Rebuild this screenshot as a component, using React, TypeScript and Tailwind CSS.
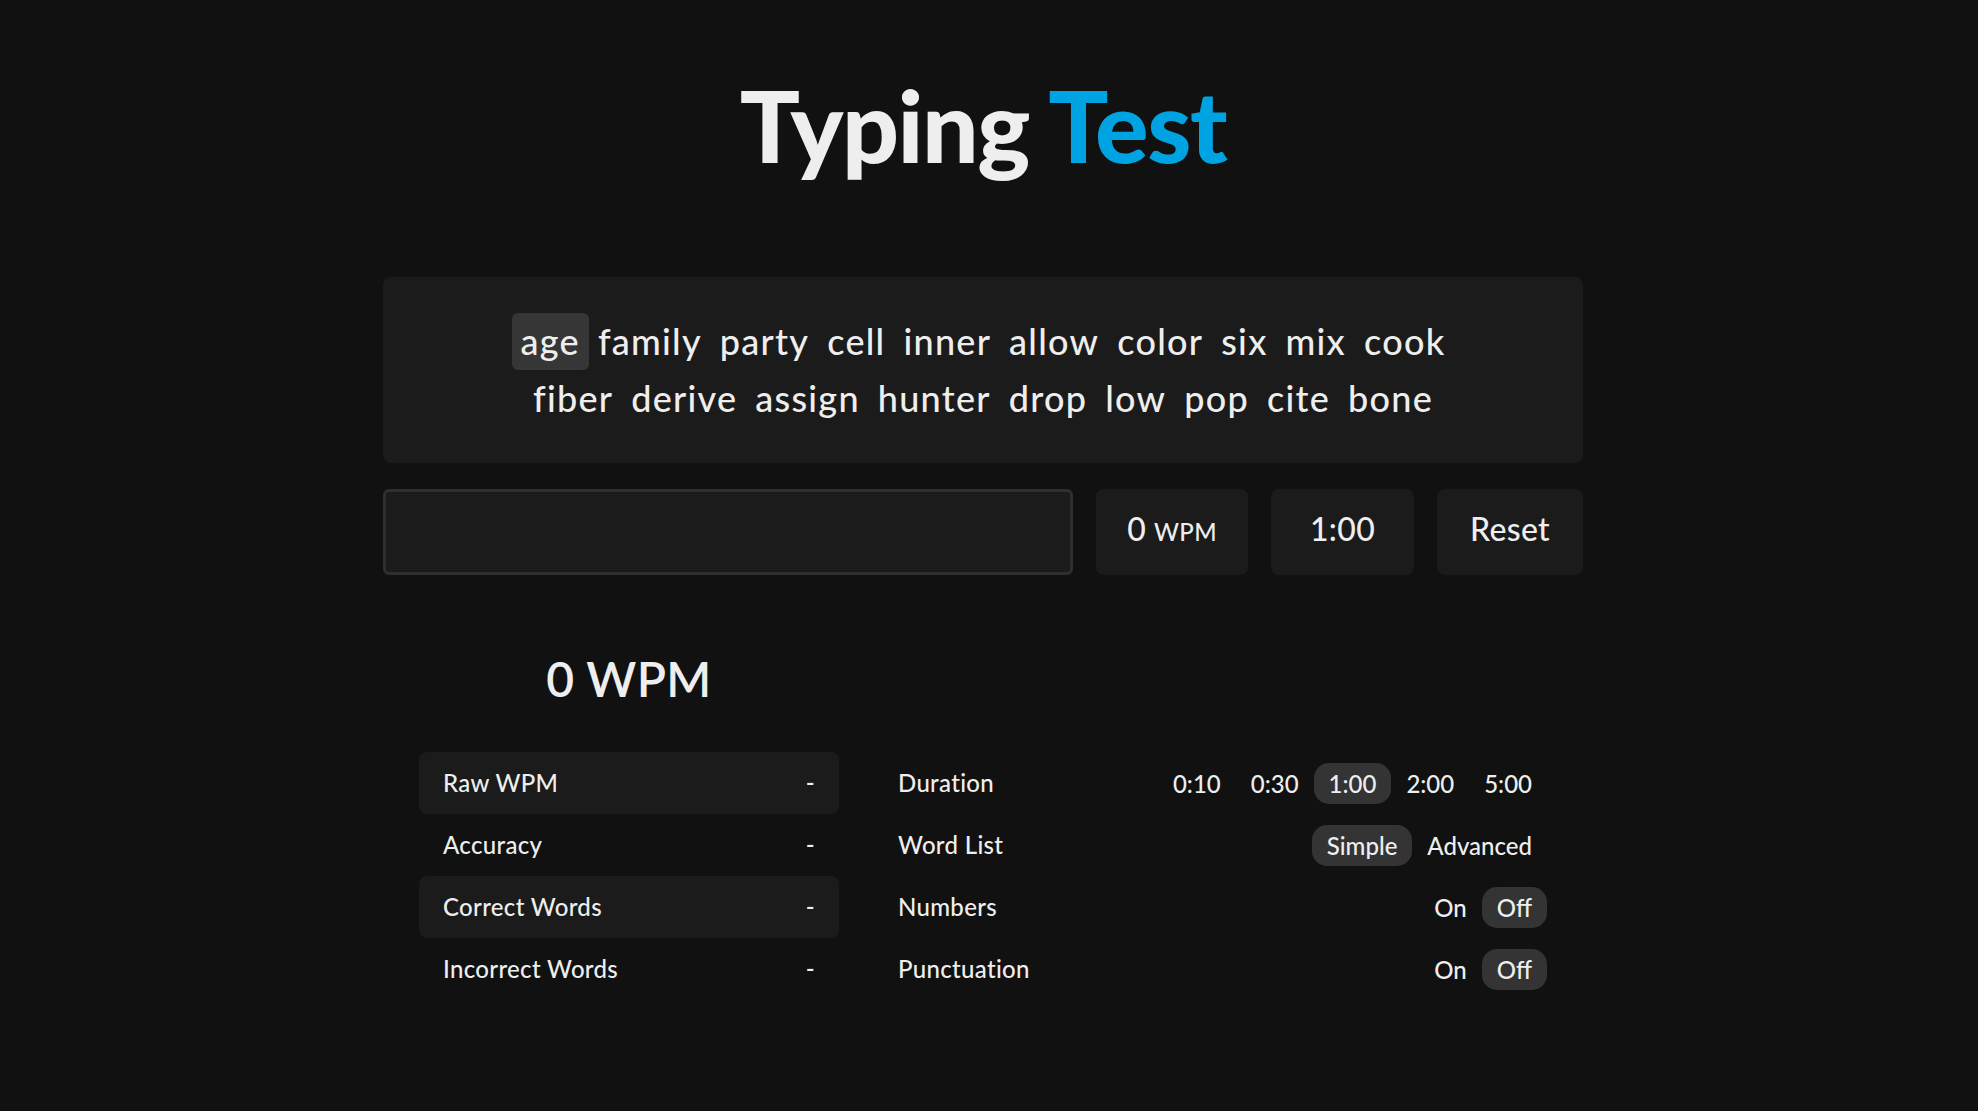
import { useState } from "react";

const lineOne = ["age", "family", "party", "cell", "inner", "allow", "color", "six", "mix", "cook"];
const lineTwo = ["fiber", "derive", "assign", "hunter", "drop", "low", "pop", "cite", "bone"];

const stats = ["Raw WPM", "Accuracy", "Correct Words", "Incorrect Words"];

type OptionRowProps = {
  label: string;
  options: string[];
  selected: string;
};

function OptionRow({ label, options, selected }: OptionRowProps) {
  return (
    <div className="flex h-[62px] items-center justify-between">
      <span>{label}</span>
      <div className="flex items-center tracking-normal">
        {options.map((opt) => (
          <button
            key={opt}
            className={
              opt === selected
                ? "h-[41px] rounded-[15px] bg-[#343434] px-[15px] leading-[41px]"
                : "h-[41px] rounded-[15px] px-[15px] leading-[41px]"
            }
          >
            {opt}
          </button>
        ))}
      </div>
    </div>
  );
}

export default function App() {
  const [text, setText] = useState("");

  return (
    <div className="min-h-[1111px] bg-[#111111] font-[Lato,'Noto_Sans',sans-serif] tracking-[0.02em] text-[#eeeeee]">
      <div className="flex justify-center pr-3">
        <main className="flex w-[1200px] flex-col">
          <h1 className="mt-[74px] text-center text-[100px] font-black leading-none tracking-[-0.015em]">
            Typing <span className="text-[#00a3e2]">Test</span>
          </h1>

          <section className="mt-[103px] rounded-lg bg-[#1b1b1b] py-[36px] text-[36px] font-medium tracking-[0.035em]">
            {[lineOne, lineTwo].map((line, i) => (
              <div key={i} className="flex justify-center">
                {line.map((word, j) => (
                  <span
                    key={word}
                    className={
                      i === 0 && j === 0
                        ? "h-[57px] rounded-md bg-[#363636] px-[9px] leading-[57px]"
                        : "h-[57px] rounded-md px-[9px] leading-[57px]"
                    }
                  >
                    {word}
                  </span>
                ))}
              </div>
            ))}
          </section>

          <div className="mt-[26px] flex h-[86px] gap-[23px] text-[32px] font-medium">
            <input
              value={text}
              onChange={(e) => setText(e.target.value)}
              className="flex-1 rounded-md border-[3px] border-[#2f2f2f] bg-[#1b1b1b] px-4 text-[32px] outline-none"
            />
            <div className="flex w-[152px] items-baseline justify-center rounded-lg bg-[#1b1b1b] pt-[16px]">
              <span>0</span>
              <span className="ml-2 text-[24px]">WPM</span>
            </div>
            <div className="flex w-[143px] items-center justify-center rounded-lg bg-[#1b1b1b] pb-[6px]">1:00</div>
            <button className="w-[146px] rounded-lg bg-[#1b1b1b] pb-[6px]">Reset</button>
          </div>

          <div className="flex px-[36px] text-[24px] font-medium">
            <div className="flex w-[420px] flex-col">
              <div className="mt-[80px] mb-[49px] text-center text-[48px] font-semibold leading-none">0 WPM</div>
              {stats.map((s, i) => (
                <div
                  key={s}
                  className={
                    i % 2 === 0
                      ? "flex h-[62px] items-center justify-between rounded-lg bg-[#1b1b1b] px-[24px]"
                      : "flex h-[62px] items-center justify-between rounded-lg px-[24px]"
                  }
                >
                  <span>{s}</span>
                  <span>-</span>
                </div>
              ))}
            </div>
            <div className="ml-[35px] flex flex-1 flex-col pt-[177px] pl-[24px]">
              <OptionRow label="Duration" options={["0:10", "0:30", "1:00", "2:00", "5:00"]} selected="1:00" />
              <OptionRow label="Word List" options={["Simple", "Advanced"]} selected="Simple" />
              <OptionRow label="Numbers" options={["On", "Off"]} selected="Off" />
              <OptionRow label="Punctuation" options={["On", "Off"]} selected="Off" />
            </div>
          </div>
        </main>
      </div>
    </div>
  );
}
